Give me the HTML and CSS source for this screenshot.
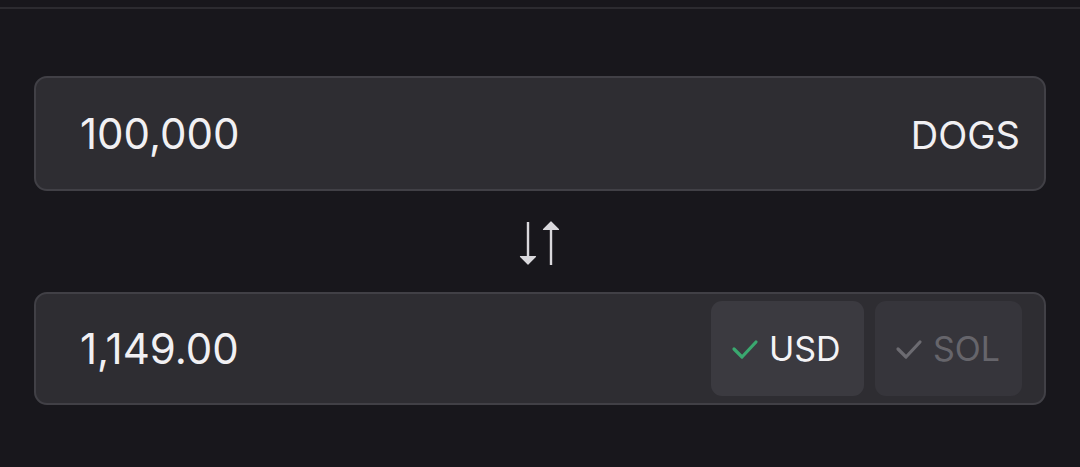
FILE: index.html
```html
<!DOCTYPE html>
<html>
<head>
<meta charset="utf-8">
<link rel="stylesheet" href="styles.css">
</head>
<body>
<div class="topbar"></div>
<main class="converter">
  <div class="field field-top">
    <span class="amount">100,000</span>
    <span class="unit">DOGS</span>
  </div>
  <div class="swap">
    <svg width="44" height="48" viewBox="0 0 44 48" fill="none" stroke="#d9d8dc" stroke-width="2.4">
      <line x1="9" y1="3" x2="9" y2="40"/>
      <path d="M1.5 37.5 L16.5 37.5 L9 45 Z" fill="#d9d8dc" stroke-width="1.2" stroke-linejoin="round"/>
      <line x1="32" y1="9" x2="32" y2="46"/>
      <path d="M24.5 10.5 L39.5 10.5 L32 3 Z" fill="#d9d8dc" stroke-width="1.2" stroke-linejoin="round"/>
    </svg>
  </div>
  <div class="field field-bottom">
    <span class="amount">1,149.00</span>
    <div class="options">
      <button class="opt opt-active">
        <svg width="28" height="22" viewBox="0 0 28 22" fill="none" stroke="#3aa86f" stroke-width="3.2" stroke-linecap="round" stroke-linejoin="round"><path d="M3 11 L11 19 L25 4"/></svg>
        <span>USD</span>
      </button>
      <button class="opt opt-idle">
        <svg width="28" height="22" viewBox="0 0 28 22" fill="none" stroke="#6c6b71" stroke-width="3.2" stroke-linecap="round" stroke-linejoin="round"><path d="M3 11 L11 19 L25 4"/></svg>
        <span>SOL</span>
      </button>
    </div>
  </div>
</main>
</body>
</html>
```
FILE: styles.css
```css
html, body {
  margin: 0;
  padding: 0;
  background: #18171c;
  width: 1080px;
  height: 467px;
  overflow: hidden;
  font-family: "Inter", "Liberation Sans", sans-serif;
}
.topbar {
  height: 7px;
  border-bottom: 2px solid #2c2b30;
}
.converter {
  padding: 67px 34px 0 34px;
  display: flex;
  flex-direction: column;
}
.field {
  box-sizing: border-box;
  display: flex;
  align-items: center;
  justify-content: space-between;
  background: #2e2d32;
  border: 2px solid #414046;
  border-radius: 13px;
}
.field-top {
  height: 115px;
  padding: 0 24px 0 44px;
}
.field-bottom {
  height: 113px;
  padding: 0 22px 0 44px;
}
.amount {
  color: #f1f0f3;
  font-size: 42px;
  font-weight: 400;
}
.unit {
  color: #f1f0f3;
  font-size: 38px;
  font-weight: 400;
  padding-top: 2px;
}
.swap {
  height: 101px;
  display: flex;
  align-items: center;
  justify-content: center;
}
.swap svg {
  margin-left: 2px;
  margin-top: 2px;
}
.options {
  display: flex;
  gap: 11px;
}
.opt {
  box-sizing: border-box;
  height: 95px;
  border: none;
  border-radius: 11px;
  display: flex;
  align-items: center;
  gap: 10px;
  font-family: inherit;
  font-size: 34px;
  padding: 0 20px 0 20px;
}
.opt-active {
  width: 153px;
  background: #3b3a40;
  color: #f4f3f6;
}
.opt-idle {
  width: 147px;
  background: #36353b;
  color: #66656b;
}
```
